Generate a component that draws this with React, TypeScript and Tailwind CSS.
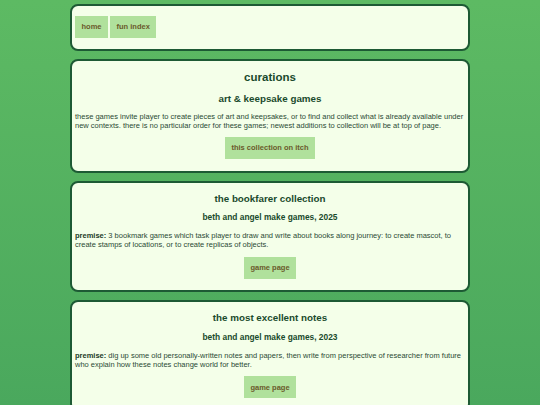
import React from "react";

const font = { fontFamily: '"Liberation Sans", Arial, sans-serif' };

function Btn({ children }: { children: React.ReactNode }) {
  return (
    <span className="block bg-[#b0e19c] text-[#6a5a2b] font-bold text-[7.5px] leading-[9px] px-[6.5px] py-[6.6px]">
      {children}
    </span>
  );
}

function Card({ children, className }: { children: React.ReactNode; className: string }) {
  return (
    <div className={"bg-[#f4ffe9] border-2 border-[#1d5a34] rounded-[8px] px-[3px] " + className}>
      {children}
    </div>
  );
}

function Game({ title, sub, premise }: { title: string; sub: string; premise: string }) {
  return (
    <Card className="pt-[10px] pb-[11.5px]">
      <h2 className="text-center font-bold text-[9.8px] leading-[11.7px] text-[#1a4a2c] mb-[8px]">{title}</h2>
      <h3 className="text-center font-bold text-[8.4px] leading-[10px] text-[#1a4a2c] mb-[9px]">{sub}</h3>
      <p className="text-[7.5px] leading-[9px] text-[#2b4a35] mb-[7.5px]">
        <b className="text-[#1a3a26]">premise:</b> {premise}
      </p>
      <div className="flex justify-center">
        <Btn>game page</Btn>
      </div>
    </Card>
  );
}

export default function App() {
  return (
    <div className="min-h-screen bg-fixed bg-gradient-to-b from-[#5dba63] to-[#4aa85d] pt-[4px] pb-[8px]" style={font}>
      <div className="w-[400px] mx-auto flex flex-col gap-[7.5px]">
        <Card className="pt-[9.7px] pb-[11.5px]">
          <div className="flex gap-[2px]">
            <Btn>home</Btn>
            <Btn>fun index</Btn>
          </div>
        </Card>
        <Card className="pt-[10px] pb-[12px]">
          <h1 className="text-center font-bold text-[11.5px] leading-[13.8px] text-[#1a4a2c] mb-[8px]">curations</h1>
          <h2 className="text-center font-bold text-[9.8px] leading-[11.7px] text-[#1a4a2c] mb-[8px]">art &amp; keepsake games</h2>
          <p className="text-[7.5px] leading-[9px] text-[#2b4a35] mb-[6.5px]">
            these games invite player to create pieces of art and keepsakes, or to find and collect what is already available under new contexts. there is no particular order for these games; newest additions to collection will be at top of page.
          </p>
          <div className="flex justify-center">
            <Btn>this collection on itch</Btn>
          </div>
        </Card>
        <Game
          title="the bookfarer collection"
          sub="beth and angel make games, 2025"
          premise="3 bookmark games which task player to draw and write about books along journey: to create mascot, to create stamps of locations, or to create replicas of objects."
        />
        <Game
          title="the most excellent notes"
          sub="beth and angel make games, 2023"
          premise="dig up some old personally-written notes and papers, then write from perspective of researcher from future who explain how these notes change world for better."
        />
      </div>
    </div>
  );
}
